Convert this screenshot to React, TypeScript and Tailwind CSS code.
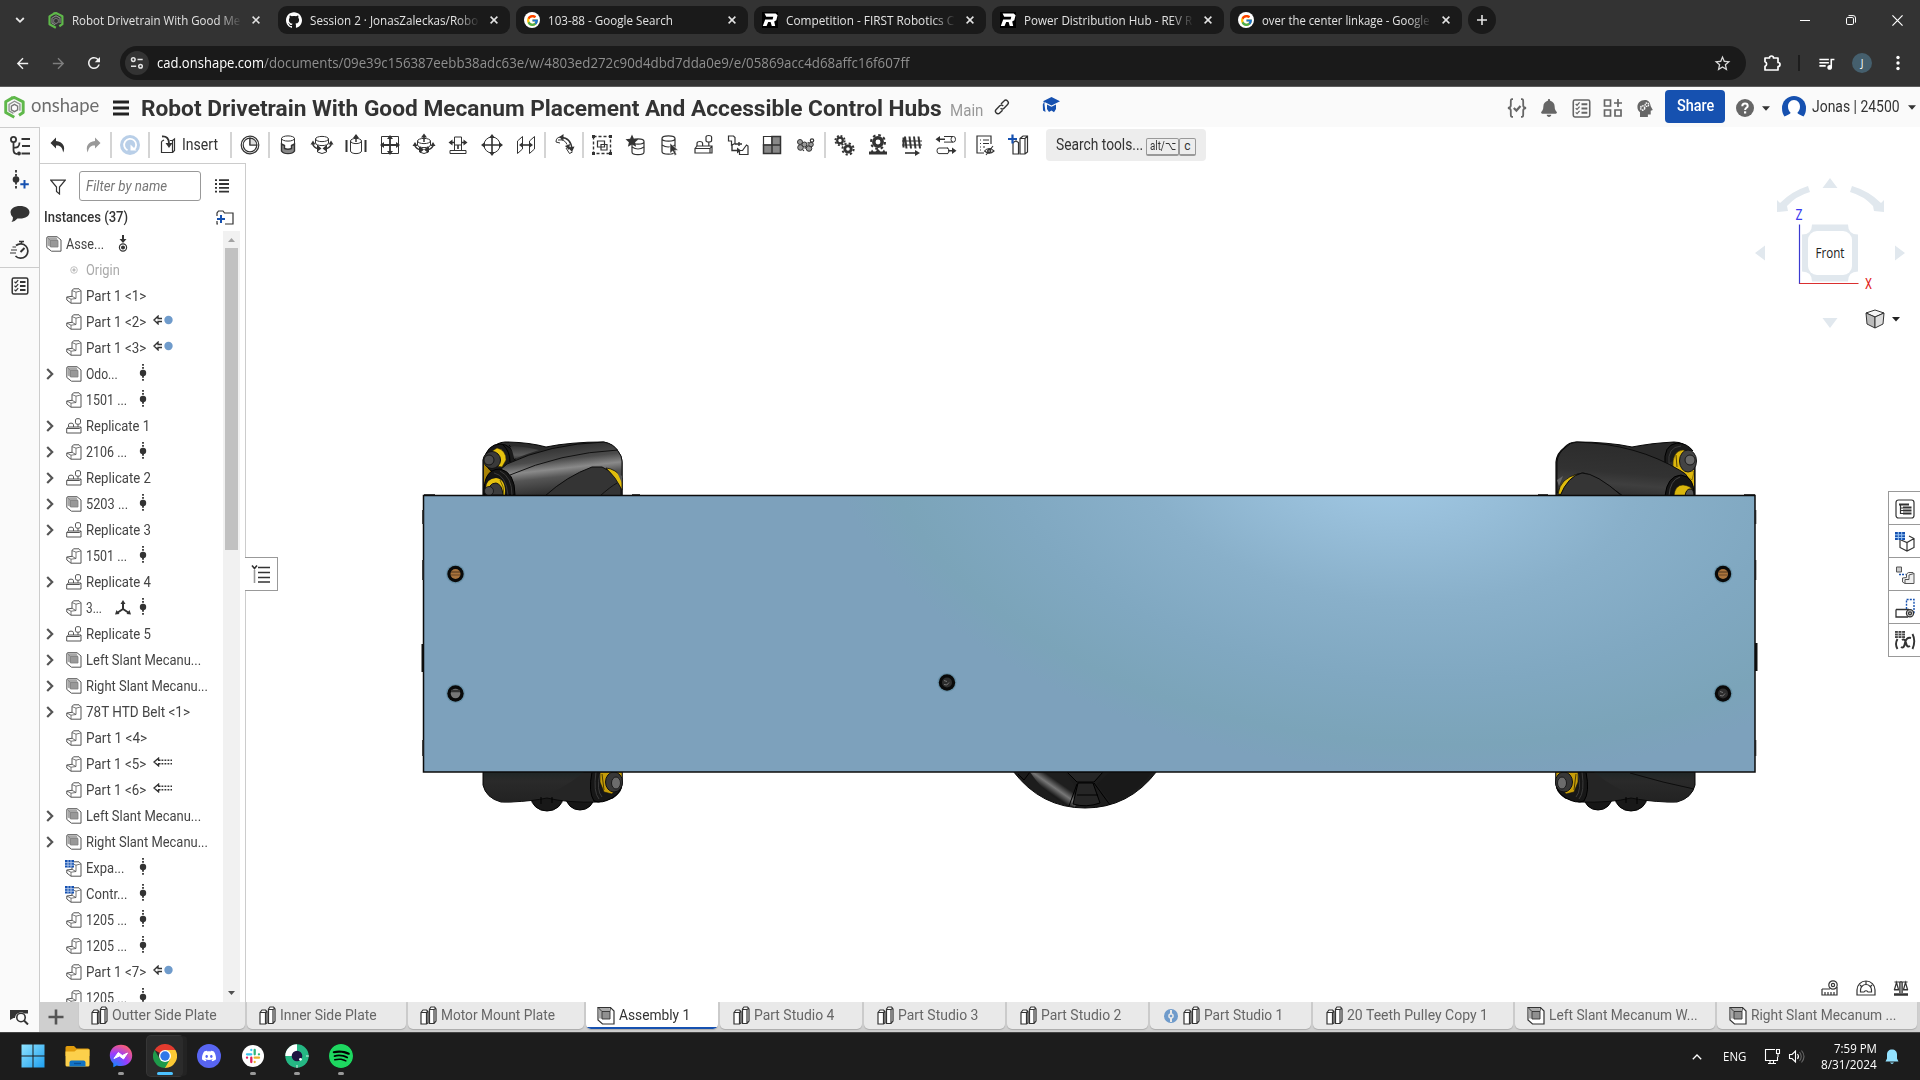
import React, { useLayoutEffect, useRef, useState } from "react";
import { SiGithub, SiSpotify, SiDiscord } from "react-icons/si";
import { FcGoogle } from "react-icons/fc";
import { FaBell } from "react-icons/fa";
import { MdQueueMusic, MdStarBorder, MdArrowBack, MdArrowForward, MdRefresh } from "react-icons/md";

const UI = "font-['Roboto',sans-serif]";
const SEGOE = "font-['Open_Sans','Noto_Sans',sans-serif]";

/* Text squeezed or stretched horizontally to an exact width. */
function Fit({ w, className = "", children }: { w: number; className?: string; children: React.ReactNode }) {
  const ref = useRef<HTMLSpanElement>(null);
  const [s, setS] = useState(1);
  useLayoutEffect(() => {
    const measure = () => {
      if (ref.current && ref.current.offsetWidth) setS(w / ref.current.offsetWidth);
    };
    measure();
    document.fonts?.ready.then(measure);
  }, [w]);
  return (
    <span className={"block shrink-0 whitespace-pre " + className} style={{ width: w }}>
      <span ref={ref} className="inline-block origin-left" style={{ transform: `scaleX(${s})` }}>
        {children}
      </span>
    </span>
  );
}

function I({ s = 24, c = "#333", sw = 1.2, vb = "0 0 24 24", h, className = "", children }: {
  s?: number; c?: string; sw?: number; vb?: string; h?: number; className?: string; children: React.ReactNode;
}) {
  return (
    <svg width={s} height={h ?? s} viewBox={vb} fill="none" stroke={c} strokeWidth={sw} className={"shrink-0 " + className}>
      {children}
    </svg>
  );
}

/* ---------- browser ---------- */
const RevLogo = () => (
  <I s={16} vb="0 0 16 16" c="none">
    <rect width="16" height="16" fill="#000" />
    <path d="M2.600 1.500H13.600L15.600 3.200 14.300 8.200 12.200 9.600 13.200 14H9.800L8.600 10H6.200L4.600 14H.8L3.200 7.600H10.600L11.300 4.800H4.200z" fill="#fff" />
  </I>
);

const OnshapeLogo = ({ w = 16, h = 17 }: { w?: number; h?: number }) => (
  <svg width={w} height={h} viewBox="0 0 20 22" fill="none" className="shrink-0">
    <path d="M8 1.800 1.600 5.600v10.200L9.800 20.400" stroke="#5fb84a" strokeWidth="2.800" strokeLinejoin="round" />
    <path d="M7 1.800 10 1.400l8.300 4.200v10.200l-4 2.600" stroke="#5fb84a" strokeWidth="2.800" strokeLinejoin="round" />
    <path d="M15.200 14.200V7.800L10 5 4.800 8v6.200l4.200 2.400" stroke="#8f9490" strokeWidth="1.300" />
    <path d="M10 8l3 1.700v3.500L10 15l-3-1.800V9.700z" stroke="#777" strokeWidth="1.300" />
  </svg>
);

function GoogleDot() {
  return (
    <span className="flex size-4 items-center justify-center rounded-full bg-white">
      <FcGoogle size={13} />
    </span>
  );
}

const browserTabs = [
  { icon: <OnshapeLogo />, t: "Robot Drivetrain With Good Me", w: 168, active: true },
  { icon: <SiGithub size={16} color="#fff" />, t: "Session 2 · JonasZaleckas/Robo", w: 168 },
  { icon: <GoogleDot />, t: "103-88 - Google Search", w: 125 },
  { icon: <RevLogo />, t: "Competition - FIRST Robotics C", w: 168 },
  { icon: <RevLogo />, t: "Power Distribution Hub - REV R", w: 168 },
  { icon: <GoogleDot />, t: "over the center linkage - Google", w: 168 },
];

function Browser() {
  return (
    <div className={"shrink-0 border-b border-[#5c5c5c] bg-[#333333] text-[#e3e3e3] " + SEGOE}>
      <div className="flex h-[42px] items-start pt-1.5">
        <div className="flex h-7 w-10 items-center justify-center">
          <I s={10} c="#e8e8e8" sw={1.8} vb="0 0 10 10"><path d="M1.200 3 5 6.800 8.800 3" /></I>
        </div>
        <div className="flex gap-1.5">
          {browserTabs.map((b, i) => (
            <div key={i} className={"flex h-7 w-[232px] items-center rounded-[9px] pl-2 " + (b.active ? "" : "bg-[#1a1a1a]")}>
              <span className="flex w-4 shrink-0 justify-center">{b.icon}</span>
              <div className={"ml-2 w-[170px] pt-px text-xs " + (b.w > 150 ? "[mask-image:linear-gradient(to_right,black_86%,transparent_100%)]" : "")}>
                <Fit w={b.w}>{b.t}</Fit>
              </div>
              <I s={8} c="#e3e3e3" sw={1.5} vb="0 0 8 8" className="ml-[10px]"><path d="M.6.6l6.800 6.800M7.400.6.6 7.400" /></I>
            </div>
          ))}
          <div className="flex size-7 items-center justify-center rounded-full bg-[#1a1a1a]">
            <I s={12} c="#e3e3e3" sw={1.6} vb="0 0 12 12"><path d="M6 1v10M1 6h10" /></I>
          </div>
        </div>
        <div className="ml-auto flex h-7 items-center">
          <div className="flex w-[46px] justify-center"><I s={10} c="#fff" sw={1} vb="0 0 10 10"><path d="M0 5.500h10" /></I></div>
          <div className="flex w-[46px] justify-center"><I s={10} c="#fff" sw={1} vb="0 0 10 10"><rect x=".5" y="2.500" width="7" height="7" rx="1.300" /><path d="M2.500.6H7A2.400 2.400 0 0 1 9.500 3v4.600" /></I></div>
          <div className="flex w-[46px] justify-center"><I s={11} c="#fff" sw={1.1} vb="0 0 10 10"><path d="M.4.4l9.200 9.200M9.600.4.4 9.600" /></I></div>
        </div>
      </div>
      <div className="flex h-[44px] items-center pb-[2px]">
        <div className="flex w-[120px] items-center pl-1">
          <div className="flex w-9 justify-center"><MdArrowBack size={17} color="#f0f0f0" /></div>
          <div className="flex w-9 justify-center"><MdArrowForward size={17} color="#7e7e7e" /></div>
          <div className="flex w-9 justify-center"><MdRefresh size={18} color="#f0f0f0" /></div>
        </div>
        <div className="flex h-[34px] w-[1626px] items-center rounded-full bg-[#1a1a1a] pl-[5px]">
          <div className="flex size-6 items-center justify-center rounded-full bg-[#333]">
            <I s={14} c="#e3e3e3" sw={1.5} vb="0 0 14 14"><circle cx="3.300" cy="3.600" r="1.800" /><path d="M7.500 3.600h5.200M1 10.200h5.200" /><circle cx="10.500" cy="10.200" r="1.800" /></I>
          </div>
          <div className="ml-2 flex text-sm">
            <Fit w={107} className="text-white">cad.onshape.com</Fit>
            <Fit w={645} className="text-[#8f8f8f]">/documents/09e39c156387eebb38adc63e/w/4803ed272c90d4dbd7dda0e9/e/05869acc4d68affc16f607ff</Fit>
          </div>
          <MdStarBorder size={19} color="#d8d8d8" className="mr-[14px] ml-auto" />
        </div>
        <div className="flex w-[52px] justify-center">
          <I s={18} vb="0 0 18 18" c="#fff" sw={1.700}><path d="M2 4h4.500a2 2 0 1 1 4 0H15v4.500a2 2 0 1 1 0 4V16H2v-3.800a2.300 2.300 0 0 0 0-4.400z" strokeLinejoin="round" /></I>
        </div>
        <div className="h-4 w-[2px] bg-[#1d1d1d]" />
        <div className="flex w-[52px] justify-center"><MdQueueMusic size={19} color="#fff" /></div>
        <div className="flex size-5 items-center justify-center rounded-full bg-[#455f6d] text-[10px] text-white">J</div>
        <div className="ml-[24px]"><I s={4} h={16} c="none" vb="0 0 4 16"><g fill="#fff"><circle cx="2" cy="2.500" r="1.700" /><circle cx="2" cy="8" r="1.700" /><circle cx="2" cy="13.500" r="1.700" /></g></I></div>
      </div>
    </div>
  );
}

/* ---------- document header ---------- */
function Caret({ c = "#333" }: { c?: string }) {
  return <I s={8} h={5} c="none" vb="0 0 8 5"><path d="M0 .3h8L4 4.800z" fill={c} /></I>;
}

function Header() {
  return (
    <div className={"flex h-10 shrink-0 items-center bg-[#fafafa] text-[#333] " + UI}>
      <div className="flex w-[113px] items-center pl-1">
        <OnshapeLogo w={21} h={23} />
        <Fit w={68} className="ml-1.5 -mt-1 font-['Lato',sans-serif] text-[19px] leading-5 text-[#6d6d6d]">onshape</Fit>
      </div>
      <I s={16} c="none" vb="0 0 16 16" className="mt-0.5"><path d="M0 .6h16v3H0zM0 6.600h16v3H0zM0 12.600h16v3H0z" fill="#222" /></I>
      <Fit w={801} className="ml-[12px] mt-1 text-[21.500px] font-bold leading-7">Robot Drivetrain With Good Mecanum Placement And Accessible Control Hubs</Fit>
      <Fit w={33} className="ml-[8px] mt-2 text-base leading-6 text-[#999]">Main</Fit>
      <div className="ml-2.5 flex w-[18px] justify-center">
        <I s={16} sw={1.4} vb="0 0 16 16"><path d="M7 5 10 2a2.400 2.400 0 0 1 3.600 3.400L10 9.200a2.300 2.300 0 0 1-3.400 0M9.200 7a2.300 2.300 0 0 0-3.400-.2L2.200 10.600A2.400 2.400 0 0 0 5.700 14L8.600 11.200" /></I>
      </div>
      <div className="-mt-1 ml-[31px]">
        <I s={18} h={16} c="none" vb="0 0 18 16"><path d="M9.500 0 18 4.200 9.500 8.400 2.500 5v2.500L3.500 15 1 13.500.8 7.500 2 5 1 4.200zM5 7.600l4.500 2.200L14 7.600V12l-2 3.200-2.500-1.800L7 15 5 12z" fill="#1651b0" /></I>
      </div>
      <div className="mt-0.5 ml-auto flex items-center">
        <div className="flex w-8 justify-center">
          <I s={20} c="#666" sw={1.800} vb="0 0 20 20"><path d="M6 1.200H5Q3.800 1.200 3.800 3.500v4Q3.800 9.500 1 10 3.800 10.500 3.800 12.500v4q0 2.300 1.200 2.300h1M14 1.200h1q1.200 0 1.200 2.300v4q0 2 2.800 2.500-2.800.5-2.800 2.500v4q0 2.300-1.200 2.300h-1" /><path d="M6.800 10l2.600 2.600L13.500 8" strokeWidth="2.200" /></I>
        </div>
        <div className="flex w-8 justify-center"><FaBell size={18} color="#666" /></div>
        <div className="flex w-8 justify-center"><Checklist c="#666" s={19} /></div>
        <div className="flex w-8 justify-center">
          <I s={20} c="#666" sw={1.700} vb="0 0 20 20"><path d="M1.500 2h6v6h-6zM1.500 12h6v6h-6zM12 12h6v6h-6zM15 1v8M11 5h8" /></I>
        </div>
        <div className="flex w-8 justify-center">
          <I s={19} c="none" vb="0 0 20 20">
            <path d="M9.500 1C4.500 1 1.500 4.300 1.500 8.300c0 2.600 1.200 4.300 2.700 5.700V19h8.300v-2.800h3V12.300l2.200-.6-2.200-4C15 3.500 13 1 9.500 1z" fill="#666" />
            <circle cx="7" cy="9.500" r="2.200" stroke="#fafafa" strokeWidth="1.600" strokeDasharray="1.600 .6" /><circle cx="11.500" cy="6" r="1.800" stroke="#fafafa" strokeWidth="1.500" strokeDasharray="1.500 .6" />
          </I>
        </div>
        <div className="-mt-1 ml-1 flex h-[33px] w-[60px] items-center justify-center rounded bg-[#1651b0]">
          <Fit w={37} className="text-base font-medium text-white">Share</Fit>
        </div>
        <div className="ml-[11px] flex items-center">
          <I s={18} c="none" vb="0 0 18 18"><circle cx="9" cy="9" r="9" fill="#666" /><path d="M6.300 7.200C6.300 5.400 7.500 4.500 9 4.500s2.700.9 2.700 2.400c0 1.900-2.600 1.900-2.600 4" stroke="#fff" strokeWidth="2" /><path d="M8 12.300h2.200v2.200H8z" fill="#fff" /></I>
          <span className="ml-2"><Caret /></span>
        </div>
        <div className="ml-3">
          <I s={24} c="none" vb="0 0 24 24"><path d="M0 12a12 12 0 0 1 24 0q0 6-3 9H3q-3-3-3-9z" fill="#1651b0" /><path d="M12 4c-3.700 0-6 3-6 6.500 0 2.700 1 4.700 2.600 6.300Q8.500 18 2.500 20.500V24h19v-3.500Q15.500 18 15.400 16.800C17 15.200 18 13.200 18 10.500 18 7 15.700 4 12 4z" fill="#fff" /></I>
        </div>
        <Fit w={88} className="-mt-0.5 ml-1.5 text-base leading-5">Jonas | 24500</Fit>
        <span className="mr-[4px] ml-2 -mt-0.5"><Caret /></span>
      </div>
    </div>
  );
}

function Checklist({ c = "#333", s = 18 }: { c?: string; s?: number }) {
  return (
    <I s={s} c={c} sw={1.500} vb="0 0 18 18">
      <rect x="1.200" y="1" width="15.600" height="16" rx="1.500" />
      <path d="M9 5h5.500M9 9h5.500M9 13h5.500" strokeWidth="1.800" />
      <path d="M3.500 4.700l1.300 1.200 2.400-2.700M3.500 8.700l1.300 1.200 2.400-2.700M3.500 12.700l1.300 1.200 2.400-2.700" strokeWidth="1.200" />
    </I>
  );
}

/* ---------- CAD icons ---------- */
const K = "#333";
const cyl = (x: number, y: number, w: number, h: number) =>
  `M${x} ${y}v${h}a${w / 2} 2.600 0 0 0 ${w} 0v${-h}a${w / 2} 2.600 0 0 0 ${-w} 0a${w / 2} 2.600 0 0 0 ${w} 0`;

const ic = {
  undo: <I s={18} vb="0 0 18 18" c="none"><path d="M7 1.500 1.500 7 7 12.500V9.500C11 9 13.500 11.500 14.200 16.500c2.600-5.500-.2-11-7.200-11.500z" fill="#333" /></I>,
  redo: <I s={18} vb="0 0 18 18" c="none"><path d="M11 1.500 16.500 7 11 12.500V9.500C7 9 4.500 11.500 3.800 16.500 1.200 11 4 5.500 11 5z" fill="#999" /></I>,
  rebuild: <I s={20} vb="0 0 20 20" c="none"><circle cx="10" cy="10" r="10" fill="#b9cfe8" /><path d="M7.500 15.300A6 6 0 1 1 14 14.500" stroke="#fff" strokeWidth="1.800" /><path d="M10.500 9.500v6h6z" fill="#fff" /></I>,
  insert: <I s={20} vb="0 0 20 20"><path d="M3.500 6.500v11h11v-12h-2M3.500 6.500 6 5" /><path d="M14.500 17.500l2-2V4l-2 1.500M14.500 5.500H12" /><path d="M4 1.500q7-.5 7 7" strokeWidth="1.800" /><path d="M7.500 8h7L11 13z" fill="#333" stroke="none" /></I>,
  clock: <I s={20} vb="0 0 20 20"><circle cx="10" cy="10" r="8.800" /><path d="M10 3.200A6.800 6.800 0 1 0 16.800 10H10z" /><path d="M10 3.200A6.800 6.800 0 0 1 16.800 10H10z" fill="#ddd" /></I>,
  fasten: <I><path d={cyl(5.5, 5.5, 13, 12)} strokeWidth="1" /><path d="M5.500 11v7c2 3.500 11 3.500 13 0v-7l-3 1.500v3q-3.500 1.500-7 0v-3z" fill="#888" strokeWidth="1.400" /></I>,
  revolute: <I><path d={cyl(5.5, 6, 13, 4)} strokeWidth="1" /><path d="M7.500 12v7q4.500 3 9 0v-7" strokeWidth="1" /><path d="M3 10v2q2 3.500 5.500 3.500M21 10v2q-2 3.500-5.500 3.500" strokeWidth="1.500" /><path d="M7.500 12v6.500l4-3zM16.500 12v6.500l-4-3zM.5 11.500l2.500-4 2.500 4zM18.500 11.500l2.500-4 2.500 4z" fill={K} stroke="none" /></I>,
  slider: <I><path d={cyl(6.5, 8, 11, 10)} strokeWidth="1" /><path d="M2.500 7v12M21.500 7v12" strokeWidth="2" /><path d="M12 2v7" strokeWidth="1.500" /><path d="M9 5l3-4 3 4z" fill={K} stroke="none" /></I>,
  planar: <I><path d="M3.500 3.500h17v17h-17z" strokeWidth="1" /><path d="M12 4v16M4 12h16" strokeWidth="1.800" /><path d="M12 2l3 4H9zM12 22l3-4H9zM2 12l4-3v6zM22 12l-4-3v6z" fill={K} stroke="none" /></I>,
  cylindrical: <I><path d={cyl(5.5, 8, 13, 4)} strokeWidth="1" /><path d="M7.500 14v5q4.500 3 9 0v-5" strokeWidth="1" /><path d="M12 3v6M3 12v1q2 3.500 5.500 3.500M21 12v1q-2 3.500-5.500 3.500" strokeWidth="1.500" /><path d="M9 4.500l3-4 3 4zM8 13.500V20l4-3.500zM16 13.500V20l-4-3.500zM.5 13l2.500-4 2.500 4zM18.500 13l2.500-4 2.500 4z" fill={K} stroke="none" /></I>,
  pin: <I><path d="M8.500 4h7v8h-7zM8.500 12v5M15.500 12v5M4 17.500h16v3H4z" strokeWidth="1" /><path d="M4 9.500h5M15 9.500h5M12 12v4" strokeWidth="1.600" /><path d="M6.500 6.500v6l-4-3zM17.500 6.500v6l4-3z" fill={K} stroke="none" /></I>,
  ball: <I><circle cx="12" cy="12" r="8" strokeWidth="1" /><path d="M12 3v18M3 12h18" strokeWidth="1.600" /><path d="M12 1l3 4H9zM12 23l3-4H9zM1 12l4-3v6zM23 12l-4-3v6z" fill={K} stroke="none" /></I>,
  parallel: <I><path d="M3.500 20.500V8l5-4.500V16zM15.500 20.500V8l5-4.500V16z" strokeWidth="1" /><path d="M7 12h10" strokeWidth="1.600" /><path d="M5 12l4-3v6zM19 12l-4-3v6z" fill={K} stroke="none" /></I>,
  tangent: <I><path d="M4 9q0-5 5-5M4 9l4 1M9 4l1 3M14 15l3.500 5.500 3-1.500" strokeWidth="1" /><path d="M6 7q7-1 9 4.500" strokeWidth="1" /><path d="M9 4.500q10 0 11 12" strokeWidth="1.500" /><path d="M11.500 1v6.500L7 4.200zM22.500 13.500 20 19l-4-4.500zM13 13l5-2-1 6z" fill={K} stroke="none" /></I>,
  group: <I><path d="M3.500 3.500h17v17h-17z" strokeDasharray="3 2" strokeWidth="1.400" /><path d="M7.500 8h7v6h-7zM11 11.500h6v5.500h-6z" /><path d="M2 2h3v3H2zM19 2h3v3h-3zM2 19h3v3H2zM19 19h3v3h-3z" fill={K} stroke="none" /></I>,
  starCyl: <I><path d={cyl(8, 8.5, 12, 10.5)} /><path d="M8 14q6 4 12 0" /><path d="M8 1.500l1.900 4.200 4.600.5-3.400 3 1 4.500L8 11.400 3.900 13.700l1-4.500-3.400-3 4.600-.5z" fill={K} stroke="none" /></I>,
  cylCursor: <I><path d={cyl(4, 5.5, 13, 13)} /><path d="M4 12q6 4 13 0" /><path d="M12 10v10.500l2.700-2.500 2 4.500 2-1-2-4.200h3.600z" fill={K} stroke="#fff" strokeWidth=".6" /></I>,
  replicate: <I><path d="M3 15.500 5 13h15v7H3zM3 15.500h15l2-2.500M18 15.500V20" /><path d="M5 13v-2.500a2.800 2 0 0 1 5.600 0V13" /><path d="M14 4v3.500a2.800 1.500 0 0 0 5.600 0V4a2.800 1.500 0 0 0-5.600 0M16.800 9v4" /></I>,
  pattern: <I><path d="M2.500 3h5l1.500 1.500v6l-3.500 1.500v-4H2.500zM13.500 21.500v-4h3l4-5.500 1.500 1v8.500z" /><path d="M6 12v5.500h7M9 11h7M13 9v4" strokeWidth="1.400" /><path d="M11 14.500l4 3-4 3z" fill={K} stroke="none" /></I>,
  grid4: <I><path d="M3.500 3.500h8.500v8.500H3.500z" fill="#fff" /><path d="M12 3.500h8.500V12H12zM3.500 12H12v8.500H3.500zM12 12h8.500v8.500H12z" fill="#888" strokeWidth="1.500" /></I>,
  spheres: <I><g fill="#999" strokeWidth="1"><circle cx="6" cy="9" r="2.500" /><circle cx="6.500" cy="14.500" r="2.800" /><circle cx="10.500" cy="11.500" r="2.500" /><circle cx="15" cy="15.500" r="2.800" /><circle cx="17" cy="11.500" r="2.300" /></g><circle cx="18" cy="7.500" r="1.700" /><path d="M9 18l3-4 3-6" strokeDasharray="1.500 1.500" /></I>,
  gears: <I><g stroke={K}><circle cx="8" cy="7.500" r="2.800" strokeWidth="2.200" /><circle cx="8" cy="7.500" r="4.700" strokeWidth="1.800" strokeDasharray="1.900 1.790" /><circle cx="16" cy="16" r="3.200" strokeWidth="2.800" /><circle cx="16" cy="16" r="5.600" strokeWidth="2" strokeDasharray="2.200 2.200" /></g></I>,
  rack: <I><circle cx="12" cy="9" r="4.200" strokeWidth="3.500" /><circle cx="12" cy="9" r="7" strokeWidth="2" strokeDasharray="2.700 2.800" /><path d="M3 21.500v-3h2l1-2 1.500 2h2L12 16l2.500 2.500h2l1.500-2 1 2h2v3z" fill={K} stroke="none" /></I>,
  screw: <I><path d="M2 8h20M2 12h20" strokeWidth="1" /><path d="M5 3.500l1.500 12M9.500 3.500l1.500 12M14 3.500l1.500 12M18.500 3.500l1.500 12M3.500 4.500v10" strokeWidth="2" /><path d="M5 20h12" strokeWidth="1.600" /><path d="M15 17l5 3-5 3z" fill={K} stroke="none" /></I>,
  linear: <I><path d="M10 3.500h9.500a2 2.800 0 0 1 0 5.600H10M19 3.500a2 2.800 0 0 0 0 5.600M14 15H5a2 2.800 0 0 0 0 5.600h9M13 15a2 2.800 0 0 1 0 5.600" strokeWidth="1" /><path d="M4 6.300h7M14 17.800h6" strokeWidth="1.600" /><path d="M6 3v6.500L1.500 6.300zM18 14.500V21l4.500-3.200z" fill={K} stroke="none" /></I>,
  bom: <I><path d="M18 11V3H4v17h7M7 7h1M10 7h6M7 10.500h1M10 10.500h6M7 14h1M10 14h2M7 17h1" /><path d="M11.500 18q4.500-5 9.500 0-4.500 4.500-9.500 0zM13 22l7-9" strokeWidth="1.100" /><circle cx="16.200" cy="18" r="1.600" fill="#888" /></I>,
  explode: <I><path d="M6 9.500 9 8l2.500 1.500V21H6zM13 5.500 16 3h4.500v16L18 21h-5zM13 5.500h5V21M18 5.500l2.500-2.500" /><path d="M5.500 1.500v9M1 6h9" stroke="#1651b0" strokeWidth="2.200" /></I>,
};

const Sep = () => <div className="h-[26px] w-[2px] shrink-0 bg-[#d4d4d4]" />;
const Cells = ({ items, className = "" }: { items: React.ReactNode[]; className?: string }) => (
  <div className={"flex " + className}>
    {items.map((x, i) => <div key={i} className="flex w-[34px] justify-center">{x}</div>)}
  </div>
);

function Toolbar() {
  return (
    <div className={"flex h-9 shrink-0 items-center bg-white " + UI}>
      <div className="flex w-[70px] justify-around">{ic.undo}{ic.redo}</div>
      <Sep />
      <div className="flex w-9 justify-center">{ic.rebuild}</div>
      <Sep />
      <div className="flex w-20 items-center pl-2">{ic.insert}<Fit w={36} className="ml-1 text-base text-[#333]">Insert</Fit></div>
      <Sep />
      <div className="flex w-9 justify-center">{ic.clock}</div>
      <Sep />
      <Cells className="mx-px" items={[ic.fasten, ic.revolute, ic.slider, ic.planar, ic.cylindrical, ic.pin, ic.ball, ic.parallel]} />
      <Sep />
      <div className="flex w-9 justify-center">{ic.tangent}</div>
      <Sep />
      <Cells className="mx-px" items={[ic.group, ic.starCyl, ic.cylCursor, ic.replicate, ic.pattern, ic.grid4, ic.spheres]} />
      <Sep />
      <Cells className="mx-px" items={[ic.gears, ic.rack, ic.screw, ic.linear]} />
      <Sep />
      <Cells className="ml-[2px]" items={[ic.bom, ic.explode]} />
      <div className="ml-[10px] flex h-8 w-40 items-center rounded bg-[#ededed] pl-2.5 text-[#333]">
        <Fit w={87} className="text-base">Search tools...</Fit>
        <div className="mt-1 ml-[3px] flex text-xs leading-[15px]">
          <div className="h-[18px] w-[33px] rounded-[2px] border border-b-2 border-[#999] pl-[3px]"><Fit w={26}>alt/⌥</Fit></div>
          <div className="h-[18px] w-[17px] rounded-[2px] border border-b-2 border-[#999] text-center">c</div>
        </div>
      </div>
    </div>
  );
}

/* ---------- left rail ---------- */
function Rail() {
  return (
    <div className="flex w-10 shrink-0 flex-col items-center border-t border-r border-[#ccc] bg-[#fafafa]">
      <div className="flex h-9 w-full items-center justify-center">
        <I s={22} vb="0 0 22 22" sw={1.800}><circle cx="4.500" cy="4.500" r="2.600" /><path d="M4.500 7v8q0 4 4 4M4.500 12.500q6 1 6-5M12.500 4H21M13 11h8M12.500 18.500H21" /><circle cx="10" cy="18.500" r="1" /></I>
      </div>
      <div className="flex h-9 w-full items-center justify-center pb-1">
        <I s={18} h={20} vb="0 0 18 20" sw={1.800}><path d="M5 0v20" strokeDasharray="2.500 1.500" /><circle cx="5" cy="9.500" r="3.300" fill={K} stroke="none" /><path d="M13.500 10v8.500M9.300 14.200h8.500" stroke="#1651b0" strokeWidth="2" /></I>
      </div>
      <div className="flex h-8 w-full items-center justify-center pb-1">
        <I s={20} h={18} vb="0 0 20 18" c="none"><path d="M10 1c5.500 0 9.500 2.500 9.500 6.300S15.500 13.600 10 13.600q-1.500 0-2.600-.2Q5 16.500 1.500 17q1.500-2 1.500-4.500Q.5 10.500.5 7.300C.5 3.500 4.500 1 10 1z" fill="#333" /></I>
      </div>
      <div className="flex h-9 w-full items-center justify-center border-b border-[#ccc]">
        <I s={20} vb="0 0 20 20" sw={1.700}><path d="M6 5.500A7.200 7.200 0 1 1 5.500 16M9 1.500h5M11.500 2v2.500" /><path d="M0 13h6M1 10h6M2.500 7H6" strokeWidth="1.200" /><path d="M10.500 12l4-4" strokeWidth="2" /></I>
      </div>
      <div className="flex h-9 w-full items-center justify-center"><Checklist /></div>
      <div className="mt-auto flex h-[30px] w-full items-center justify-center">
        <I s={19} h={16} vb="0 0 19 16" sw={1.600}><path d="M0 1h18v3.500h-3.500A6 6 0 0 0 5 9H3.500L0 11z" fill={K} stroke="none" /><circle cx="11" cy="8.500" r="4.200" fill="#fafafa" /><path d="M14 11.500l4 4" strokeWidth="2" /></I>
      </div>
    </div>
  );
}

/* ---------- instance tree ---------- */
const LPart = () => (
  <>
    <path d="M.8 9 6 8.300V2.500L7.500.8H13L15 2.800V15.200H5L.8 12z" fill="#fff" />
    <path d="M.8 9 5 11.200V15.200M5 11.200 10 10.500M10 10.500V4.200L15 2.800M6 2.500 10 4.200M6 8.300l4 2.200" strokeWidth=".8" />
  </>
);
const tree = {
  asm: <I s={16} vb="0 0 16 16" sw={1} c="#555"><path d="M.8 2q0-1.300 1.200-1.300h9L15 4v11.200H5.500L.8 11.500z" fill="#fff" /><path d="M1.500 1.300H10.500L12 4.500V11H5L1.500 9.500z" fill="#a8a8a8" stroke="none" /><path d="M4.500 4.500H12V11H4.500zM1 1.200l3.500 3.300" fill="#999" stroke="#808080" strokeWidth=".8" /></I>,
  part: <I s={16} vb="0 0 16 16" sw={1} c="#555"><LPart /></I>,
  rep: <I s={16} vb="0 0 16 16" sw={1} c="#555"><path d="M.7 10.500 2.500 9H15v6H.7zM.7 10.500H13.500L15 9" /><path d="M2.500 9V6.800a2.500 1.700 0 0 1 5 0V9M9.500 1.800v3a2.500 1.500 0 0 0 5 0v-3a2.500 1.200 0 0 0-5 0M12 6.300V9" /></I>,
  der: <I s={17} vb="0 0 17 17" sw={1} c="#555"><g transform="translate(1 1)"><LPart /></g><path d="M0 0h9v7.500H0z" fill="#1651b0" stroke="none" /><path d="M0 2.700h9M0 5.200h9M3 0v7.500M6 0v7.500" stroke="#bcd0ee" strokeWidth=".9" /></I>,
  origin: <I s={8} vb="0 0 8 8" sw={.9} c="#bbb"><circle cx="4" cy="4" r="3.300" /><circle cx="4" cy="4" r="1.200" fill="#bbb" /></I>,
};
const Mate = () => <I s={16} h={18} vb="0 0 16 18" sw={1.8} className="-mt-0.5"><path d="M8 0v18" strokeDasharray="1.800 1.200" /><circle cx="8" cy="9" r="3.200" fill={K} stroke="none" /></I>;
const Ground = () => <I s={16} h={18} vb="0 0 16 18" sw={1.2} className="-mt-0.5"><path d="M8 1v6" strokeWidth="2" /><path d="M4.500 5h7L8 9z" fill={K} stroke="none" /><circle cx="8" cy="13.500" r="3.600" /><circle cx="8" cy="13.500" r="1.400" fill={K} /></I>;
const Axis = () => <I s={16} vb="0 0 16 16" sw={2}><path d="M8 2v7M8 9l-6 4M8 9l6 4" /><path d="M5.500 4h5L8 0zM0 14.500l1.500-4.500 3 4zM16 14.500l-1.500-4.500-3 4z" fill={K} stroke="none" /></I>;
const ArrowDot = () => <I s={20} h={10} vb="0 0 20 10" sw={1.4} className="-mt-1"><path d="M9 3.500H5V1.200L1 5l4 3.800V6.500h4" /><circle cx="15.500" cy="5" r="4.200" fill="#6f9bcb" stroke="none" /></I>;
const ArrowDash = () => <I s={20} h={10} vb="0 0 20 10" sw={1.4} className="-mt-1"><path d="M5.500 3.300V1.200L1 5l4.500 3.800V6.700M5 3.300h2.500M5 6.700h2.500" /><path d="M8.500 3.300H19M8.500 6.700H19" strokeDasharray="1.800 1.200" /></I>;

type Row = [keyof typeof tree, string, number, ("mate" | "ground" | "axis" | "dot" | "dash" | "")?, boolean?];
const rows: Row[] = [
  ["asm", "Asse...", 38, "ground"],
  ["origin", "Origin", 34],
  ["part", "Part 1 <1>", 60],
  ["part", "Part 1 <2>", 60, "dot"],
  ["part", "Part 1 <3>", 60, "dot"],
  ["asm", "Odo...", 32, "mate", true],
  ["part", "1501 ...", 41, "mate"],
  ["rep", "Replicate 1", 64, "", true],
  ["part", "2106 ...", 41, "mate", true],
  ["rep", "Replicate 2", 65, "", true],
  ["asm", "5203 ...", 42, "mate", true],
  ["rep", "Replicate 3", 65, "", true],
  ["part", "1501 ...", 41, "mate"],
  ["rep", "Replicate 4", 65, "", true],
  ["part", "3...", 16, "axis"],
  ["rep", "Replicate 5", 65, "", true],
  ["asm", "Left Slant Mecanu...", 115, "", true],
  ["asm", "Right Slant Mecanu...", 122, "", true],
  ["part", "78T HTD Belt <1>", 104, "", true],
  ["part", "Part 1 <4>", 61],
  ["part", "Part 1 <5>", 60, "dash"],
  ["part", "Part 1 <6>", 60, "dash"],
  ["asm", "Left Slant Mecanu...", 115, "", true],
  ["asm", "Right Slant Mecanu...", 122, "", true],
  ["der", "Expa...", 38, "mate"],
  ["der", "Contr...", 41, "mate"],
  ["part", "1205 ...", 41, "mate"],
  ["part", "1205 ...", 41, "mate"],
  ["part", "Part 1 <7>", 60, "dot"],
  ["part", "1205 ...", 41, "mate"],
];

function TreeRow({ r, root }: { r: Row; root: boolean }) {
  const [icon, label, w, extra, open] = r;
  const box = extra === "axis" ? "w-[29px]" : extra === "dot" || extra === "dash" ? "w-[67px]" : extra ? "w-[49px]" : "w-[125px]";
  return (
    <div className="flex h-[26px] shrink-0 items-center">
      {!root && (
        <div className="flex w-5 shrink-0 justify-start pl-px">
          {open && <I s={8} h={12} vb="0 0 8 12" c="#555" sw={2.2}><path d="M1.200 1l5 5-5 5" /></I>}
        </div>
      )}
      <div className="flex w-[17px] shrink-0 items-center justify-center">{tree[icon]}</div>
      <div className={"ml-1 shrink-0 text-sm " + box + (icon === "origin" ? " text-[#aaa]" : " text-[#444]")}>
        <Fit w={w}>{label}</Fit>
      </div>
      {extra === "ground" && <Ground />}
      {extra === "axis" && <><Axis /><span className="w-1" /><Mate /></>}
      {extra === "mate" && <Mate />}
      {extra === "dot" && <ArrowDot />}
      {extra === "dash" && <ArrowDash />}
    </div>
  );
}

function TreePanel() {
  return (
    <div className={"flex w-[206px] shrink-0 flex-col overflow-hidden border-t border-r border-[#ccc] bg-white " + UI}>
      <div className="mt-[7px] flex h-[30px] shrink-0 items-center">
        <I s={16} vb="0 0 16 16" className="mt-0.5 ml-[10px]"><path d="M.8 1.200h14.400L9.500 8v7l-3-2.500V8z" /></I>
        <div className="ml-[13px] flex h-[30px] w-[122px] items-center rounded-[3px] border border-[#999] pl-1.5">
          <Fit w={81} className="text-sm italic text-[#777]">Filter by name</Fit>
        </div>
        <I s={14} vb="0 0 14 14" sw={1.8} className="ml-[14px]"><path d="M0 1.200h2M4 1.200h10M0 5h2M4 5h10M0 8.800h2M4 8.800h10M0 12.600h2M4 12.600h10" /></I>
      </div>
      <div className="flex h-[30px] shrink-0 items-center pl-[4px]">
        <Fit w={84} className="mt-px text-sm font-medium text-[#333]">Instances (37)</Fit>
        <I s={18} h={15} vb="0 0 18 15" className="mt-0.5 ml-[88px]"><path d="M1 6V3l1.500-2H7l1.500 2H17v11H9M1 11v3h1" /><path d="M5 5v8M1 9h8" stroke="#1651b0" strokeWidth="2" /></I>
      </div>
      <div className="flex min-h-0 flex-1">
        <div className="flex w-[183px] flex-col overflow-hidden pl-[5px]">
          {rows.map((r, i) => <TreeRow key={i} r={r} root={i === 0} />)}
        </div>
        <div className="flex w-[17px] flex-col items-center bg-[#f1f1f1]">
          <div className="flex h-[17px] items-center"><I s={7} h={4} c="none" vb="0 0 7 4"><path d="M0 4 3.500 0 7 4z" fill="#a3a3a3" /></I></div>
          <div className="h-[302px] w-[13px] bg-[#c1c1c1]" />
          <div className="mt-auto flex h-[19px] items-center"><I s={7} h={4} c="none" vb="0 0 7 4"><path d="M0 0h7L3.500 4z" fill="#505050" /></I></div>
        </div>
      </div>
    </div>
  );
}

/* ---------- 3D model ---------- */
function TopWheel() {
  return (
    <g strokeLinejoin="round">
      <path d="M483 496V460q1-5 8-11 7-7 14-7 24 0 41 5 25-5 57-5 10 2 14 9 5 5 5 12v33z" fill="#2c2c2c" stroke="#0a0a0a" strokeWidth="1.200" />
      <path d="M484 456h8v40h-8z" fill="#a88206" />
      <circle cx="500" cy="459" r="15" fill="#1a1a1a" stroke="#000" />
      <path d="M497 448q9 2 9 12l-4 7-14-3-3-8z" fill="#e6c20e" stroke="#3a2f00" strokeWidth=".5" />
      <circle cx="492" cy="460" r="8.500" fill="#3a3a3a" stroke="#111" />
      <circle cx="489" cy="460" r="5" fill="#4c4c4c" stroke="#151515" />
      <path d="M509 445q6 6 5 14M503 445q7 6 7 17" stroke="#000" fill="none" />
      <path d="M514 446q14 1 25 4-13 4-25 9-1-8-4-12z" fill="url(#rollB)" />
      <path d="M507 464q42-20 97-22 10 2 14 9 4 5 4 10v35H512q2-20-12-26z" fill="url(#rollA)" stroke="#0c0c0c" strokeWidth="1" />
      <path d="M510 475q50-22 108-25" fill="none" stroke="#111" />
      <path d="M545 496q22-20 47-29h10q14 6 19 20v9z" fill="#343434" stroke="#0c0c0c" />
      <path d="M600 496q10-9 17-13" stroke="#111" fill="none" />
      <path d="M606 468q10 1 16 10v12q-6-13-16-22z" fill="#e0bc0c" stroke="#111" strokeWidth=".8" />
      <path d="M617 472l5 4v7z" fill="#555" />
      <path d="M484 495q-1-26 16-26 15 3 15 26z" fill="#151515" stroke="#000" />
      <path d="M486 488q0-9 10-10 10 1 9 17h-10z" fill="#e6c20e" />
      <path d="M488 495q0-12 8-12 6 1 7 12z" fill="#3c3c3c" stroke="#111" />
      <path d="M500 480q4 6 4 15" stroke="#3a2f00" fill="none" strokeWidth=".7" />
      <circle cx="489" cy="491" r="4.500" fill="#4c4c4c" stroke="#111" strokeWidth=".8" />
      <path d="M500 471q12 6 12 24M494 473q12 2 14 22" stroke="#3a3a3a" fill="none" />
    </g>
  );
}

function TopWheelRight() {
  return (
    <g strokeLinejoin="round">
      <path d="M1556 496V462q1-9 8-14 5-6 12-6 32 0 56 5 20-4 42-5 10 0 15 8 6 5 6 12v34z" fill="#2a2a2a" stroke="#0a0a0a" strokeWidth="1.200" />
      <path d="M1673 462l21 8v26h-21z" fill="#d8b009" />
      <path d="M1665 465q-2-20 12-22 10 0 16 8" fill="#1b1b1b" stroke="#000" />
      <path d="M1669 464q-2-17 12-18" stroke="#3c3c3c" fill="none" />
      <path d="M1673 468q-1-17 10-18l5 2-4 14 10 6-2 8z" fill="#dcb60c" stroke="#3a2f00" strokeWidth=".5" />
      <path d="M1676 455l1 12" stroke="#5a4800" />
      <ellipse cx="1688" cy="461" rx="8.500" ry="11" fill="#444" stroke="#151515" />
      <circle cx="1690" cy="460" r="5" fill="#6a6a6a" stroke="#1a1a1a" />
      <path d="M1557 476V462q1-9 8-14 5-6 12-6 60 2 104 29 10 4 12 25h-70q-30-22-40-23-16 1-26 20z" fill="url(#rollC)" stroke="#0c0c0c" />
      <path d="M1558 494q2-16 20-20-12 10-14 21z" fill="#e0bc0c" stroke="#111" strokeWidth=".8" />
      <path d="M1557 480l6-4-4 10z" fill="#666" />
      <path d="M1560 496q8-20 22-23 14 0 40 23z" fill="#353535" stroke="#0c0c0c" />
      <path d="M1665 496q2-20 16-21 14 2 13 21z" fill="#151515" stroke="#000" />
      <path d="M1674 496q1-11 9-11 8 1 9 5l-6 6z" fill="#dab60c" stroke="#3a2f00" strokeWidth=".5" />
      <path d="M1685 496q1-7 5-7t4 7z" fill="#555" stroke="#111" />
      <path d="M1669 496q1-16 11-19" stroke="#444" fill="none" />
    </g>
  );
}

function BottomWheel({ flip }: { flip?: boolean }) {
  return (
    <g transform={flip ? "translate(2178 0) scale(-1 1)" : undefined}>
      <ellipse cx="547" cy="797" rx="16" ry="14" fill="#181818" stroke="#000" />
      <ellipse cx="580" cy="797" rx="14" ry="13" fill="#161616" stroke="#000" />
      <path d="M483 772v13q3 13 18 17h10q22-1 36-4 20 5 52 4l14-4q9-6 9-14v-12z" fill="#252525" stroke="#090909" />
      <path d="M484 772h100q-24 20-50 27-20 4-32 3-15-4-18-17z" fill="url(#rollD)" />
      {flip && <path d="M484 789q30-6 64-16" stroke="#0c0c0c" fill="none" />}
      <path d="M592 772q-4 20 2 29 8 3 18-3 9-5 10-14v-12z" fill="#171717" stroke="#000" />
      <path d="M596 772q-3 20 3 27M600 774q-4 16 2 23" stroke="#3c3c3c" fill="none" />
      <path d="M600 772h22v8l-10 14-8-2-4-10z" fill="#c79d08" stroke="#111" strokeWidth=".6" />
      <path d="M602 774l2 16" stroke="#4a3b00" />
      <ellipse cx="614" cy="782" rx="8.500" ry="10" fill="#383838" stroke="#111" />
      <ellipse cx="616" cy="783" rx="4.500" ry="6" fill="#6c6c6c" stroke="#1c1c1c" />
      <path d="M541 797v7M552 797v6" stroke="#000" />
    </g>
  );
}

function Hole({ x, y, k }: { x: number; y: number; k: "brass" | "grey" | "dark" }) {
  return (
    <g>
      <circle cx={x} cy={y} r="9.500" fill="#4f7f92" opacity=".45" />
      <circle cx={x} cy={y} r="8.200" fill="#0a0a0a" />
      {k === "brass" && <><circle cx={x} cy={y} r="5" fill="#a9733c" /><path d={`M${x - 4.5} ${y - 2}h9`} stroke="#4d341c" /><path d={`M${x - 4.5} ${y + 1}h9`} stroke="#6b4725" /></>}
      {k === "grey" && <><circle cx={x} cy={y} r="4.800" fill="#777" /><path d={`M${x - 4.5} ${y - 2.5}h9`} stroke="#333" strokeWidth="2.500" /></>}
      {k === "dark" && <><circle cx={x} cy={y} r="5" fill="#2d2d2d" /><path d={`M${x - 3} ${y + 2}q3 2 5-2M${x - 3} ${y - 2}l3 1`} stroke="#777" fill="none" /></>}
    </g>
  );
}

function Model() {
  return (
    <svg className="absolute inset-0" width="1674" height="839" viewBox="246 163 1674 839">
      <defs>
        <linearGradient id="rollA" x1="0" y1="0" x2=".25" y2="1"><stop offset=".2" stopColor="#333" /><stop offset=".42" stopColor="#4c4c4c" /><stop offset=".58" stopColor="#8a8a8a" /><stop offset=".72" stopColor="#555" /><stop offset="1" stopColor="#303030" /></linearGradient>
        <linearGradient id="rollB" x1="0" y1="0" x2="0" y2="1"><stop offset="0" stopColor="#333" /><stop offset=".7" stopColor="#5c5c5c" /><stop offset="1" stopColor="#3a3a3a" /></linearGradient>
        <linearGradient id="rollC" x1=".2" y1="0" x2="0" y2="1"><stop offset="0" stopColor="#2c2c2c" /><stop offset=".5" stopColor="#323232" /><stop offset=".7" stopColor="#3f3f3f" /><stop offset="1" stopColor="#2a2a2a" /></linearGradient>
        <linearGradient id="rollD" x1="0" y1="0" x2="0" y2="1"><stop offset="0" stopColor="#1f2626" /><stop offset=".3" stopColor="#2a2a2a" /><stop offset="1" stopColor="#222" /></linearGradient>
        <linearGradient id="omni" x1="0" y1="1" x2="1" y2="0"><stop offset=".4" stopColor="#1a1a1a" /><stop offset=".52" stopColor="#777" /><stop offset=".64" stopColor="#1e1e1e" /></linearGradient>
        <radialGradient id="plate" gradientUnits="userSpaceOnUse" cx="0" cy="0" r="1" gradientTransform="translate(1385 462) rotate(6) scale(560 310)">
          <stop offset="0" stopColor="#a3cbe7" /><stop offset=".2" stopColor="#98bfda" /><stop offset=".45" stopColor="#89b0ca" /><stop offset=".7" stopColor="#80a8c1" /><stop offset=".9" stopColor="#7ba4b9" /><stop offset="1" stopColor="#7da1bc" />
        </radialGradient>
      </defs>
      <TopWheel />
      <TopWheelRight />
      <BottomWheel />
      <BottomWheel flip />
      <path d="M1013 771q28 37 72 37t72-37z" fill="#1c1c1c" stroke="#0a0a0a" />
      <path d="M1030 772h35l15 22-5 13q-25-5-45-35z" fill="url(#omni)" />
      <path d="M1067 772h36l-9 10h-17zM1078 783h15l7 20q-14 5-27 1z" fill="#262626" stroke="#000" />
      <path d="M1077 795h21M1094 783l16 22M1077 784l-8 22M1018 774l6 6 6-8" stroke="#000" fill="none" />
      <path d="M1097 784l13-12h42q-16 22-41 31z" fill="#191919" />
      <path d="M421.500 644h3v28h-3zM1754 643h3.500v28h-3.500z" fill="#111" />
      <rect x="423.500" y="495.500" width="1331.500" height="276.500" fill="url(#plate)" stroke="#0b0b0b" strokeWidth="1.500" />
      <path d="M423 510v14M423 560v20M423 740v16M1755.500 510v14M1755.500 560v20M1755.500 740v16" stroke="#222" strokeWidth="1.600" />
      <path d="M424 494.500h11M632 494.500h8M1538 494.500h10M1744 494.500h11" stroke="#333" strokeWidth="1" />
      <Hole x={455.5} y={574} k="brass" />
      <Hole x={1723} y={574} k="brass" />
      <Hole x={455.5} y={693.5} k="grey" />
      <Hole x={1723} y={693.5} k="dark" />
      <Hole x={947} y={682.5} k="dark" />
    </svg>
  );
}

function ViewCube() {
  return (
    <svg className="absolute top-[7px] right-0" width="200" height="170" viewBox="1720 170 200 170" fill="#e1e8ee">
      <path d="M1830 178l7.500 10h-15zM1830 328l7.500-10h-15zM1755 253l10-7.500v15zM1905 253l-10-7.500v15z" />
      <path d="M1808 186l2 6q-14 4-23 14l1 5-11 1v-12l3 3q12-12 28-17zM1852 186l-2 6q14 4 23 14l1 5 10 1v-12l-3 3q-12-12-29-17z" />
      <path d="M1812 224.500h36q0 10 10 10v37q-10 0-10 10h-36q0-10-10-10v-37q10 0 10-10z" />
      <rect x="1808" y="231" width="44" height="44" rx="9" fill="#fff" />
      <path d="M1799.500 224.500v59.500" stroke="#3a3ad0" strokeWidth="1.200" />
      <path d="M1799.500 283.500h59" stroke="#d92f2f" strokeWidth="1.200" />
      <text x="1830" y="258" textAnchor="middle" fontSize="14" textLength="29" lengthAdjust="spacingAndGlyphs" fill="#222" fontFamily="Open Sans">Front</text>
      <text x="1799" y="220" textAnchor="middle" fontSize="14.500" textLength="7" lengthAdjust="spacingAndGlyphs" fill="#3a3af0" fontFamily="Roboto">Z</text>
      <text x="1868.500" y="289" textAnchor="middle" fontSize="14.500" textLength="7" lengthAdjust="spacingAndGlyphs" fill="#e02020" fontFamily="Roboto">X</text>
      <g stroke="#333" strokeWidth="1" strokeLinejoin="round">
        <path d="M1866 313l9-3 9 3-9 4z" fill="#f4f4f4" /><path d="M1866 313l9 4v11l-8-4z" fill="#bbb" /><path d="M1884 313l-9 4v11l8-4z" fill="#ddd" />
      </g>
      <path d="M1892 317h8l-4 4.500z" fill="#222" />
    </svg>
  );
}

const sideIcons = [
  <I s={20} vb="0 0 20 20"><rect x="1" y="1" width="18" height="18" rx="2.500" strokeWidth="1.200" /><path d="M4 5.500h10M8 8.500h8.500M8 11.500h8.500M8 14.500h8.500" strokeWidth="2" /><path d="M5.500 6v8.500H8M5.500 9H8M5.500 11.500H8" /></I>,
  <I s={20} vb="0 0 20 20"><path d="M5 8v7.500l7 3.500 7-3.500v-9L14 4M12 10.500V19M19 6.500l-7 4L6 8" /><path d="M0 0h10v8H0z" fill="#1651b0" stroke="none" /><path d="M0 2.800h10M0 5.500h10M3.300 0v8M6.700 0v8" stroke="#9ec8f5" strokeWidth="1" /></I>,
  <I s={20} vb="0 0 20 20" sw={1} c="#555"><path d="M1.500 2h5v5h-5z" fill="#ccc" /><path d="M4 9.500h6.500" stroke="#1651b0" strokeDasharray="2 1" strokeWidth="1.300" /><path d="M7.500 13l4-.5V9l2-1.500H18l1 1v10h-9L7.500 17zM10 18.500v-4h4V10l5-1.500" fill="#eee" /></I>,
  <I s={20} vb="0 0 20 20"><path d="M1 11.500h13M1 11.500V19h12" strokeWidth="1.300" /><path d="M11.500 11V1.500H19V16" stroke="#1651b0" strokeDasharray="2 1.200" strokeWidth="1.400" /><circle cx="15" cy="15.300" r="3.600" fill="#ccc" /><circle cx="15" cy="15.300" r="1.500" /></I>,
  <I s={22} vb="0 0 22 22"><path d="M3.500 9q-3 5 0 10M18.500 4q3.500 7 0 15" strokeWidth="1.900" /><path d="M7 17q3 2 4-4t6-5M8 10q3-2 4 3t4 3" strokeWidth="2" /><path d="M1 1h10v7H1z" fill="#444" stroke="none" /><path d="M1 3.300h10M1 5.700h10M4.300 1v7M7.700 1v7" stroke="#ddd" strokeWidth=".8" /></I>,
];

function Viewport() {
  return (
    <div className="relative w-[1674px] shrink-0 bg-white">
      <Model />
      <ViewCube />
      <div className="absolute top-[394px] -left-px flex h-[34px] w-[33px] items-center justify-center border border-l-0 border-[#999] bg-white">
        <I s={20} vb="0 0 20 20"><path d="M7 3.500h12M7 8.500h12M7 13.500h12M7 18h12" strokeWidth="1.300" /><path d="M1 1.500l2.500 3L6 1.500" strokeWidth="1.600" /><path d="M3.500 6v13" stroke="#999" strokeWidth="1.600" /></I>
      </div>
      <div className="absolute top-[328px] right-0 flex w-8 flex-col border-t border-l border-[#999] bg-white">
        {sideIcons.map((x, i) => (
          <div key={i} className="flex h-[33px] items-center justify-center border-b border-[#999] pt-px pl-px">{x}</div>
        ))}
      </div>
      <div className="absolute right-[11px] bottom-[4px] flex items-center gap-[17px]">
        <I s={18} vb="0 0 18 18" sw={1.2}><path d="M1 10h8M1 10v6h15V8M4 16v-3M7 16v-3M10 16v-3M13 16v-3" /><circle cx="12" cy="6" r="4.200" /><circle cx="12" cy="6" r="1.600" /></I>
        <I s={20} vb="0 0 20 20" sw={1.2}><path d="M1 17v-5a9 9 0 0 1 18 0v5z" /><path d="M4.500 14v-2a5.500 5.500 0 0 1 11 0v2h-3.500q-2-2.500-4 0z" /><path d="M10 3v3M4 7l2 2M16 7l-2 2" /></I>
        <I s={16} vb="0 0 16 16" sw={1.2}><path d="M8 1v12M1.500 2h13M3.500 2.500 1.500 9.500h4zM12.500 2.500l-2 7h4zM1 9.800h5M10 9.800h5" /><path d="M6.500 2v11M9.500 2v11" strokeWidth=".8" /><path d="M1 14.500h14" strokeWidth="2.500" /></I>
      </div>
    </div>
  );
}

/* ---------- document tabs ---------- */
const StudioIcon = () => <I s={17} h={19} vb="0 0 17 19" sw={1.2}><path d="M1 6.500 3 4h3.500L8 5.500V17L6.500 18H1zM1 6.500h5.500V18M6.500 6.500 8 5" fill="#fff" /><path d="M9.500 3 11 1h3.500L16 3v12l-2 2.500H9.500zM9.500 3.500H14V17M14 3.500 16 2" fill="#fff" /></I>;
const AsmIcon = () => <I s={18} h={19} vb="0 0 18 19" sw={1.2}><path d="M1 1.500h12.500L17 5v13H5.500L1 14z" fill="#fff" /><path d="M1.500 2h11v10.500H2z" fill="#aaa" stroke="none" /><path d="M5 5.500h8V13H5zM1 1.500 5 5.500M13.500 1.500 13 5.500" fill="#909090" strokeWidth=".9" /></I>;

const docTabs: { t: string; w: number; box: string; asm?: boolean; active?: boolean; link?: boolean }[] = [
  { t: "Outter Side Plate", w: 105, box: "w-[166px] pl-3" },
  { t: "Inner Side Plate", w: 97, box: "w-[159px] pl-3" },
  { t: "Motor Mount Plate", w: 114, box: "w-[176px] pl-3" },
  { t: "Assembly 1", w: 71, box: "w-[132px] pl-[11px]", asm: true, active: true },
  { t: "Part Studio 4", w: 80, box: "w-[142px] pl-[13px]" },
  { t: "Part Studio 3", w: 80, box: "w-[141px] pl-[13px]" },
  { t: "Part Studio 2", w: 80, box: "w-[141px] pl-[13px]" },
  { t: "Part Studio 1", w: 79, box: "w-[161px] pl-[14px]", link: true },
  { t: "20 Teeth Pulley Copy 1", w: 141, box: "w-[200px] pl-[13px]" },
  { t: "Left Slant Mecanum W...", w: 149, box: "w-[200px] pl-3", asm: true },
  { t: "Right Slant Mecanum ...", w: 145, box: "w-[200px] pl-3", asm: true },
];

function DocTabs() {
  return (
    <div className={"flex h-[30px] shrink-0 gap-[2px] bg-[#cfcfcf] " + UI}>
      <div className="-mr-[2px] flex w-[39px] items-center justify-center pr-2">
        <I s={16} vb="0 0 16 16" c="#555" sw={2.6}><path d="M8 .5v15M.5 8h15" /></I>
      </div>
      {docTabs.map((d, i) => (
        <div key={i} className={"flex h-[27px] shrink-0 flex-col rounded-b-[5px] shadow-[0_1px_1px_#aaa] " + (d.active ? "overflow-hidden bg-white text-[#333]" : "bg-[#e9e9e9] text-[#666]")}>
          <div className={"flex min-h-0 flex-1 items-center " + d.box}>
            {d.link && <I s={14} vb="0 0 14 14" c="none" className="mr-[5px]"><circle cx="7" cy="7" r="7" fill="#6f9bcb" /><path d="M7 1v12" stroke="#e9e9e9" strokeWidth="2" /><circle cx="7" cy="7" r="2.800" fill="#e9e9e9" /><circle cx="7" cy="7" r="1.300" fill="#6f9bcb" /></I>}
            {d.asm ? <AsmIcon /> : <StudioIcon />}
            <Fit w={d.w} className="ml-1 pt-px text-[15.500px]">{d.t}</Fit>
          </div>
          {d.active && <div className="-mt-0.5 h-0.5 bg-[#1651b0]" />}
        </div>
      ))}
    </div>
  );
}

/* ---------- taskbar ---------- */
const WinLogo = () => (
  <svg width="24" height="24" viewBox="0 0 24 24">
    <defs><linearGradient id="win" x1="0" y1="0" x2="1" y2="1"><stop offset="0" stopColor="#8fe3ff" /><stop offset="1" stopColor="#1e9fef" /></linearGradient></defs>
    <path d="M.5.500h11v11H.5zM12.500.500h11v11h-11zM.5 12.500h11v11H.5zM12.500 12.500h11v11h-11z" fill="url(#win)" />
  </svg>
);
const Folder = () => (
  <svg width="25" height="24" viewBox="0 0 25 24">
    <path d="M.5 3.500Q.5 2 2 2h7l2.500 2.500H23q1.500 0 1.500 1.500v6H.5z" fill="#e09b0c" />
    <path d="M.5 7.500h9l2.500-2h12.500V21q0 1.500-1.500 1.500H2Q.5 22.500.5 21z" fill="#fcd04b" />
    <path d="M4.500 22.500v-4q0-2 2-2h12q2 0 2 2v4z" fill="#1173c4" /><path d="M9 19.500h7" stroke="#0a4f93" strokeWidth="1.300" />
  </svg>
);
const Messenger = () => (
  <svg width="24" height="24" viewBox="0 0 24 24">
    <defs><radialGradient id="msg" cx=".2" cy="1" r="1.100"><stop offset="0" stopColor="#0a8cff" /><stop offset=".55" stopColor="#9a3bff" /><stop offset="1" stopColor="#ff6070" /></radialGradient></defs>
    <path d="M12 .8C5.500.8.800 5.500.800 11.600c0 3.300 1.300 6 3.500 8v3.600l3.500-1.800c1.300.4 2.700.6 4.200.6 6.500 0 11.200-4.600 11.200-10.500S18.500.8 12 .8z" fill="url(#msg)" />
    <path d="M5 14.500 9.300 8.500l4 3L18.500 9 14.500 15l-4-3z" fill="#fff" stroke="#fff" strokeLinejoin="round" />
  </svg>
);
const Chrome = () => (
  <svg width="24" height="24" viewBox="0 0 24 24">
    <path d="M12 12 1.600 6A12 12 0 0 1 22.400 6z" fill="#e33b2e" />
    <path d="M12 12V6h10.400A12 12 0 0 1 12 24z" fill="#fcc934" />
    <path d="M12 12l5.200 3L12 24A12 12 0 0 1 1.600 6L6.800 15z" fill="#1e9a4a" />
    <circle cx="12" cy="12" r="6" fill="#fff" /><circle cx="12" cy="12" r="4.700" fill="#2f78e8" />
  </svg>
);
const Slack = () => (
  <svg width="22" height="22" viewBox="0 0 22 22" strokeWidth="2.300" strokeLinecap="round">
    <circle cx="11" cy="11" r="11" fill="#fff" />
    <path d="M9.300 5v.1M5 9.300h4.300" stroke="#36c5f0" /><path d="M12.700 5v4.300M17 9.300h-.1" stroke="#2eb67d" />
    <path d="M12.700 12.700H17M12.700 17v-.1" stroke="#ecb22e" /><path d="M9.300 12.700V17M5 12.700h.1" stroke="#e01e5a" />
  </svg>
);
const Eye = () => (
  <svg width="24" height="24" viewBox="0 0 24 24">
    <circle cx="12" cy="12" r="11.700" fill="#25b884" /><path d="M12 12H.3A11.700 11.700 0 0 1 12 .3z" fill="#fff" /><circle cx="12" cy="12" r="5.300" fill="#1d1440" /><circle cx="15.500" cy="15.300" r="1.400" fill="#fff" /><path d="M12 21v3M21 12h3" stroke="#fff" strokeWidth=".8" />
  </svg>
);

const apps: { n: React.ReactNode; dot?: boolean; active?: boolean }[] = [
  { n: <WinLogo /> },
  { n: <Folder /> },
  { n: <Messenger />, dot: true },
  { n: <Chrome />, active: true },
  { n: <span className="flex size-6 items-center justify-center rounded-full bg-[#5865f2]"><SiDiscord size={14} color="#fff" /></span> },
  { n: <Slack />, dot: true },
  { n: <Eye />, dot: true },
  { n: <span className="flex size-6 items-center justify-center rounded-full bg-black"><SiSpotify size={24} color="#1ed760" /></span>, dot: true },
];

function Taskbar() {
  return (
    <div className={"flex h-12 shrink-0 border-t border-[#444] bg-[#1c1c1c] text-white " + SEGOE}>
      <div className="flex pl-[11px]">
        {apps.map((a, i) => (
          <div key={i} className="flex h-[47px] w-11 flex-col items-center pt-[3px]">
            <div className={"flex h-10 w-9 shrink-0 items-center justify-center rounded " + (a.active ? "bg-[#2b2b2b] shadow-[4px_0_0_#232323,0_0_0_1px_#363636]" : "")}>{a.n}</div>
            {a.dot && <div className="-mt-[4px] h-[3px] w-1.5 shrink-0 rounded-full bg-[#999]" />}
            {a.active && <div className="-mt-[4px] h-[3px] w-4 shrink-0 rounded-full bg-[#4cc2ff]" />}
          </div>
        ))}
      </div>
      <div className="ml-auto flex items-center pr-[21px]">
        <I s={10} vb="0 0 10 10" c="#fff" sw={1.3}><path d="M.8 7.200 5 3l4.200 4.200" /></I>
        <Fit w={23} className="ml-[21px] pt-px text-xs">ENG</Fit>
        <I s={17} vb="0 0 17 17" c="#fff" sw={1.1} className="ml-[18px]"><path d="M11 1.500H1.500v11h12V9M4 15.500h8M6 12.500v3M9.500 12.500v3M12.500 1.500h3v4h-3zM14 5.500V9" /></I>
        <I s={17} vb="0 0 17 17" c="#fff" sw={1.1} className="ml-[7px]"><path d="M1.500 6.500H4L7.500 3v11L4 10.500H1.500z" /><path d="M9.500 6q2 2.500 0 5" /><path d="M11.500 4q3.500 4.500 0 9M13.500 2.500q5 6 0 12" stroke="#666" /></I>
        <div className="ml-[16px] flex flex-col items-end text-xs leading-4">
          <Fit w={43}>7:59 PM</Fit>
          <Fit w={56}>8/31/2024</Fit>
        </div>
        <I s={14} h={16} vb="0 0 14 16" c="none" className="ml-2"><path d="M7 .5c-3 0-5 2-5 5v4L.5 12.500h13L12 9.500v-4c0-3-2-5-5-5zM5 13.500q2 2.800 4 0z" fill="#93e2ff" /></I>
      </div>
    </div>
  );
}

export default function App() {
  return (
    <div className="flex h-[1080px] w-[1920px] flex-col overflow-hidden bg-white">
      <Browser />
      <Header />
      <div className="flex h-[905px] shrink-0">
        <Rail />
        <div className="flex w-[1880px] flex-col overflow-hidden">
          <Toolbar />
          <div className="flex min-h-0 flex-1">
            <TreePanel />
            <Viewport />
          </div>
          <DocTabs />
        </div>
      </div>
      <Taskbar />
    </div>
  );
}
